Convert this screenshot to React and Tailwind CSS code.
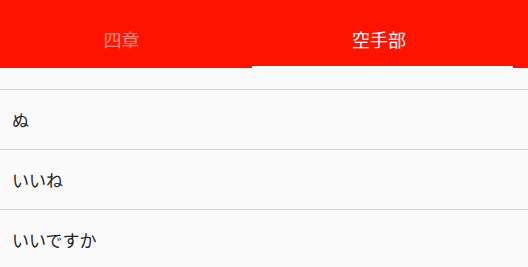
import React, { useState } from 'react';

const tabs = ['四章', '空手部'];
const items = ['ぬ', 'いいね', 'いいですか'];

const App = () => {
    const [active, setActive] = useState(1);

    return (
        <div className="w-[528px] h-[267px] overflow-hidden bg-[#fafafa] font-['Noto_Sans_CJK_JP','Noto_Sans',sans-serif]">
            <div className="h-[68px] bg-[#ff1300] flex">
                {tabs.map((t, i) => (
                    <button
                        key={t}
                        onClick={() => setActive(i)}
                        className={`${i === 0 ? 'w-[252px]' : 'w-[261px]'} h-full flex flex-col`}
                    >
                        <span className={`flex-1 flex items-center justify-center pt-[12px] text-[18px] ${i === 0 ? 'pr-[9px]' : 'pr-[7px]'} ${i === active ? 'text-white' : 'text-white/50'}`}>
                            {t}
                        </span>
                        <span className={`h-[2px] w-full ${i === active ? 'bg-white' : 'bg-transparent'}`} />
                    </button>
                ))}
            </div>
            <div className="h-[22px] border-b border-[#d6d6d6]" />
            {items.map((it) => (
                <div key={it} className="h-[60px] flex items-center px-3 text-[17px] text-[#222] border-b border-[#d6d6d6]">
                    {it}
                </div>
            ))}
        </div>
    );
};

export default App;
